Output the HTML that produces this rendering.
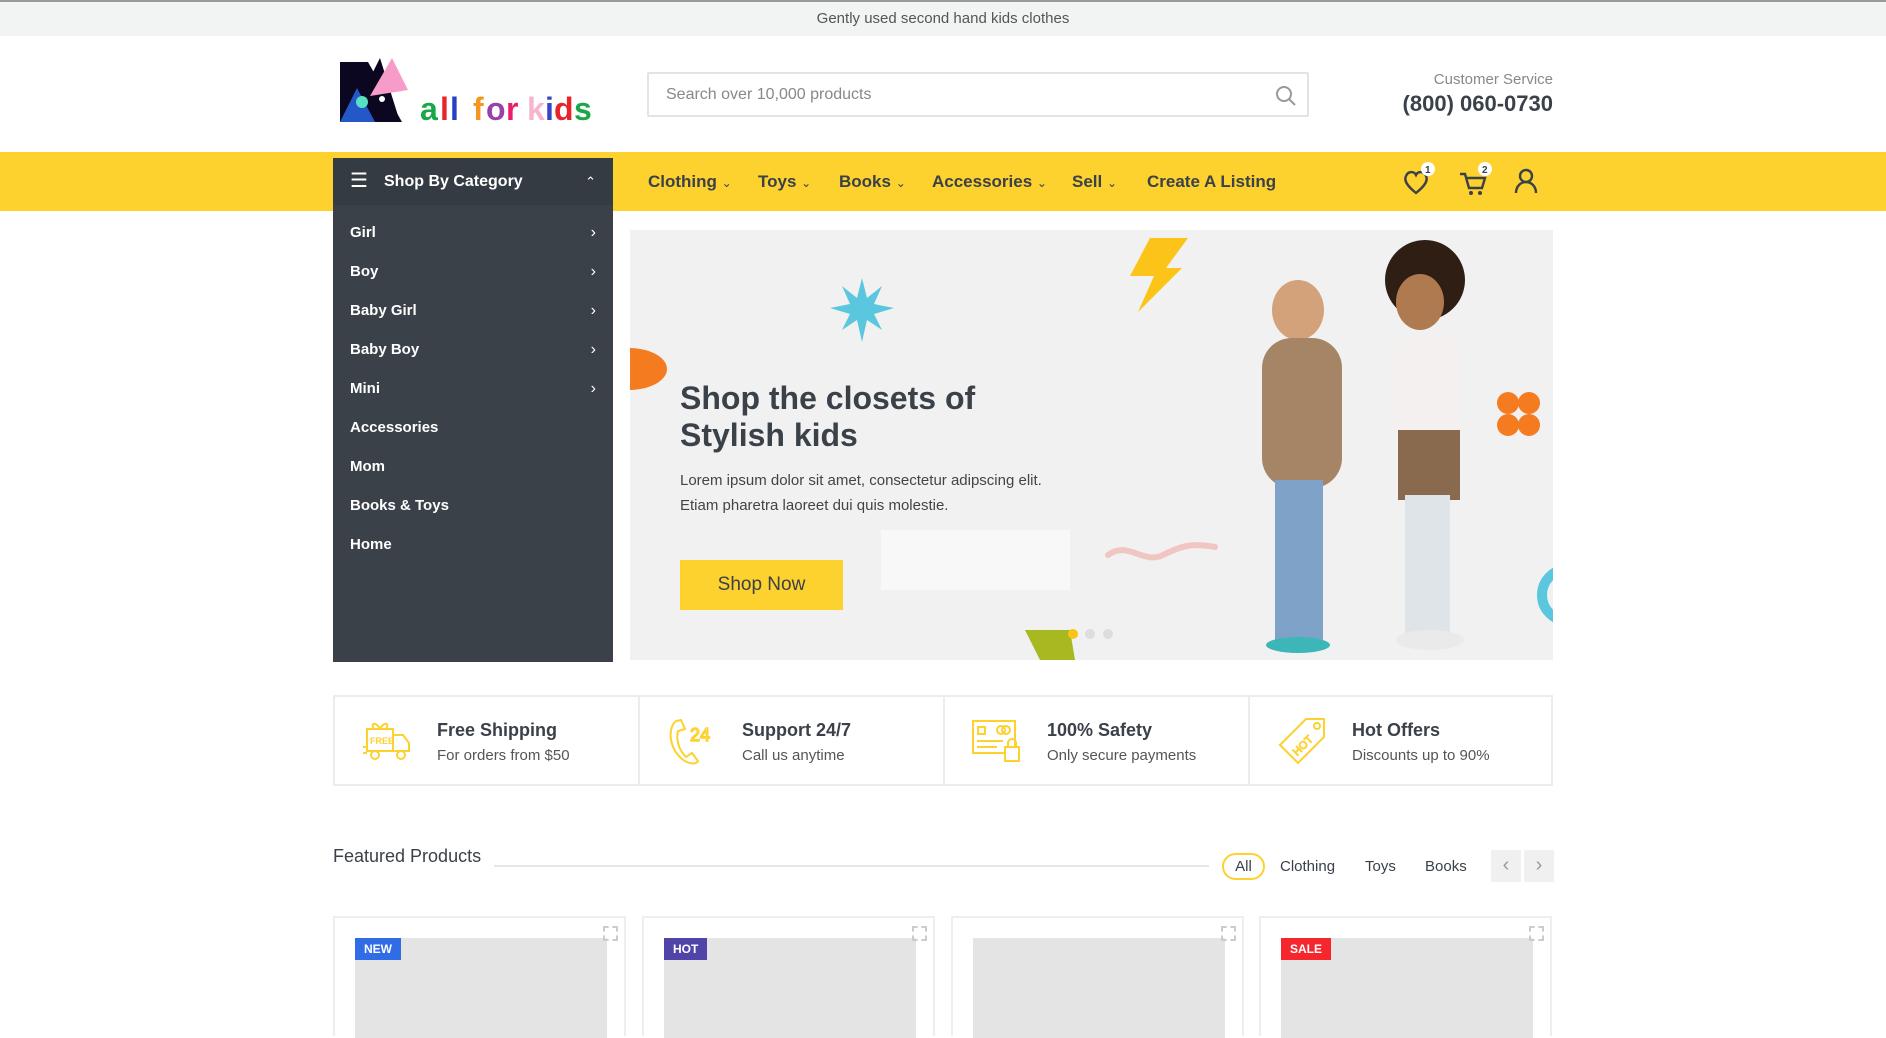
<!DOCTYPE html>
<html><head><meta charset="utf-8"><style>
*{box-sizing:border-box;margin:0;padding:0}
body{width:1886px;height:1026px;overflow:hidden;background:#fff;font-family:"Liberation Sans",sans-serif;color:#3a4149;position:relative}
.abs{position:absolute}
.top{left:0;top:0;width:1886px;height:36px;background:#f2f3f3;border-top:2px solid #999;text-align:center;font-size:15px;line-height:34px;color:#555}
.search{left:647px;top:72px;width:662px;height:45px;border:2px solid #e3e3e3;border-radius:2px;font-size:16px;color:#888;padding-left:17px;line-height:41px}
.nav{left:0;top:152px;width:1886px;height:59px;background:#fdd12e}
.navi{top:172px;font-size:17px;font-weight:bold;color:#3a4149}
.cat{left:333px;top:158px;width:280px;height:504px;background:#3a4149;color:#fff}
.cat .h{height:47px;font-weight:bold;font-size:16px;line-height:47px;padding-left:51px;background:#353b42;position:relative}
.cat .i{height:39px;line-height:39px;font-size:15px;font-weight:bold;padding-left:17px;position:relative}
.chev{position:absolute;right:17px;top:0;font-weight:normal;font-size:16px}
.banner{left:630px;top:230px;width:923px;height:430px;background:#f1f1f1;overflow:hidden}
.feat{top:695px;height:91px;border:2px solid #ececec;width:1220px;left:333px}
.fc{top:0;width:305px;height:87px;border-right:2px solid #ececec}
.fc b{position:absolute;left:102px;top:23px;font-size:18px}
.fc span{position:absolute;left:102px;top:50px;font-size:15px;color:#555}
.card{top:916px;width:293px;height:120px;border:2px solid #eee;border-bottom:none}
.card .img{position:absolute;left:20px;top:20px;width:252px;height:100px;background:#e4e4e4}
.tag{position:absolute;left:20px;top:20px;height:22px;padding:0 9px;color:#fff;font-size:12px;font-weight:bold;line-height:22px}
.exp{position:absolute;right:6px;top:8px;width:15px;height:15px;border:2px dashed #ccc}
</style></head><body>
<div class="abs top">Gently used second hand kids clothes</div>

<svg class="abs" style="left:340px;top:58px" width="270" height="68" viewBox="0 0 270 68">
<polygon points="0,4 0,64 62,64 28,4" fill="#0b0720"/>
<polygon points="20,64 60,64 40,0 30,20" fill="#0b0720"/>
<polygon points="0,64 35,64 17,30" fill="#2457c7"/>
<polygon points="30,38 52,0 68,32" fill="#f79bc8"/>
<circle cx="22" cy="44" r="6" fill="#58e0c4"/><circle cx="42" cy="41" r="3" fill="#fff"/>
<g font-family="Liberation Sans" font-weight="bold" font-size="32">
<text x="80" y="62" fill="#18a84a">a</text>
<text x="100" y="62" fill="#e8242b">l</text>
<text x="110" y="62" fill="#2a3fc4">l</text>
<text x="133" y="62" fill="#f7941d">f</text>
<text x="146" y="62" fill="#9b3fa9">o</text>
<text x="166" y="62" fill="#ee1b6c">r</text>
<text x="187" y="62" fill="#f8b4cf">k</text>
<text x="205" y="62" fill="#3845c8">i</text>
<text x="214" y="62" fill="#e8242b">d</text>
<text x="234" y="62" fill="#18a84a">s</text></g>
</svg>

<div class="abs search">Search over 10,000 products
<svg style="position:absolute;right:10px;top:11px" width="22" height="22" viewBox="0 0 22 22"><circle cx="9" cy="9" r="7" fill="none" stroke="#999" stroke-width="2"/><path d="M14 14l6 6" stroke="#999" stroke-width="2"/></svg></div>
<div class="abs" style="right:333px;top:71px;text-align:right;font-size:15px;color:#888">Customer Service</div>
<div class="abs" style="right:333px;top:91px;text-align:right;font-size:22px;font-weight:bold;color:#3a4149">(800) 060-0730</div>

<div class="abs nav"></div>
<div class="abs navi" style="left:648px">Clothing <span style="font-weight:normal;font-size:12px">&#8964;</span></div>
<div class="abs navi" style="left:758px">Toys <span style="font-weight:normal;font-size:12px">&#8964;</span></div>
<div class="abs navi" style="left:839px">Books <span style="font-weight:normal;font-size:12px">&#8964;</span></div>
<div class="abs navi" style="left:932px">Accessories <span style="font-weight:normal;font-size:12px">&#8964;</span></div>
<div class="abs navi" style="left:1072px">Sell <span style="font-weight:normal;font-size:12px">&#8964;</span></div>
<div class="abs navi" style="left:1147px">Create A Listing</div>
<svg class="abs" style="left:1400px;top:160px" width="150" height="40" viewBox="0 0 150 40">
<path d="M16 33C6 25 4 20 6 16c2-5 8-5 10-1 2-4 8-4 10 1 2 4 0 9-10 17z" fill="none" stroke="#3a4149" stroke-width="2.4"/>
<circle cx="28" cy="9" r="7" fill="#fff"/><text x="25" y="13" font-size="10" font-weight="bold" fill="#3a4149">1</text>
<path d="M60 14h5l4 14h13l3-10H67" fill="none" stroke="#3a4149" stroke-width="2.4"/><circle cx="71" cy="33" r="2" fill="#3a4149"/><circle cx="80" cy="33" r="2" fill="#3a4149"/>
<circle cx="85" cy="9" r="7" fill="#fff"/><text x="82" y="13" font-size="10" font-weight="bold" fill="#3a4149">2</text>
<circle cx="126" cy="16" r="6" fill="none" stroke="#3a4149" stroke-width="2.4"/><path d="M116 33c0-7 5-11 10-11s10 4 10 11" fill="none" stroke="#3a4149" stroke-width="2.4"/>
</svg>

<div class="abs cat">
<div class="h"><span style="position:absolute;left:17px;top:0;font-size:20px;font-weight:normal">&#9776;</span>Shop By Category<span class="chev" style="font-size:13px">&#8963;</span></div>
<div style="height:8px"></div>
<div class="i">Girl<span class="chev">&#8250;</span></div>
<div class="i">Boy<span class="chev">&#8250;</span></div>
<div class="i">Baby Girl<span class="chev">&#8250;</span></div>
<div class="i">Baby Boy<span class="chev">&#8250;</span></div>
<div class="i">Mini<span class="chev">&#8250;</span></div>
<div class="i">Accessories</div>
<div class="i">Mom</div>
<div class="i">Books &amp; Toys</div>
<div class="i">Home</div>
</div>

<div class="abs banner">
<svg class="abs" style="left:0;top:0" width="923" height="430" viewBox="0 0 923 430">
<rect x="251" y="300" width="189" height="60" fill="#f8f8f8"/>
<polygon points="232,48 237,68 252,56 244,74 264,78 244,84 252,100 237,90 232,112 227,90 212,100 220,84 200,78 220,74 212,56 227,68" fill="#5ac7de"/>
<polygon points="520,8 558,8 536,38 552,38 508,82 524,46 500,46" fill="#fcc419"/>
<path d="M0 118a38 21 0 0 1 37 21 38 21 0 0 1-37 21z" fill="#f47b20"/>
<circle cx="878" cy="173" r="11" fill="#f47b20"/><circle cx="899" cy="173" r="11" fill="#f47b20"/><circle cx="878" cy="195" r="11" fill="#f47b20"/><circle cx="899" cy="195" r="11" fill="#f47b20"/>
<path d="M478 325c20-15 35 10 55 0s30-12 52-8" fill="none" stroke="#f0c5c2" stroke-width="6" stroke-linecap="round"/>
<polygon points="395,400 440,400 445,430 410,430" fill="#a8b820"/>
<circle cx="938" cy="365" r="26" fill="none" stroke="#5ac7de" stroke-width="10"/>
<ellipse cx="668" cy="80" rx="26" ry="30" fill="#d3a27a"/><rect x="632" y="108" width="80" height="150" rx="30" fill="#a58566"/><rect x="645" y="250" width="48" height="160" fill="#7fa3c8"/><ellipse cx="668" cy="415" rx="32" ry="8" fill="#3cb6b6"/>
<ellipse cx="795" cy="50" rx="40" ry="40" fill="#2e1e14"/><ellipse cx="790" cy="72" rx="24" ry="28" fill="#b07a50"/><rect x="762" y="105" width="68" height="110" rx="20" fill="#f4f0f0"/><rect x="768" y="200" width="62" height="70" fill="#8a6a4e"/><rect x="775" y="265" width="45" height="140" fill="#dfe4e8"/><ellipse cx="800" cy="410" rx="34" ry="10" fill="#eaeaea"/>
<circle cx="443" cy="404" r="5" fill="#fcc419"/><circle cx="460" cy="404" r="5" fill="#ddd"/><circle cx="478" cy="404" r="5" fill="#ddd"/>
</svg>
<div class="abs" style="left:50px;top:150px;font-size:32px;font-weight:bold;line-height:37px;color:#3a4149">Shop the closets of<br>Stylish kids</div>
<div class="abs" style="left:50px;top:238px;font-size:15px;line-height:25px;color:#444">Lorem ipsum dolor sit amet, consectetur adipscing elit.<br>Etiam pharetra laoreet dui quis molestie.</div>
<div class="abs" style="left:50px;top:330px;width:163px;height:50px;background:#fdd12e;font-size:19px;line-height:50px;text-align:center;color:#3a4149">Shop Now</div>
</div>

<div class="abs feat">
<div class="abs fc" style="left:0"><svg class="abs" style="left:26px;top:20px" width="52" height="48" viewBox="0 0 52 48" fill="none" stroke="#fdd12e" stroke-width="2"><rect x="6" y="12" width="26" height="22"/><path d="M32 18h10l6 8v8H32M2 36h4M2 30h4"/><circle cx="14" cy="38" r="4"/><circle cx="40" cy="38" r="4"/><path d="M19 12c-4-8-10-6-6 0M19 12c4-8 10-6 6 0"/><text x="9" y="27" font-size="9" fill="#fdd12e" stroke="none" font-weight="bold">FREE</text></svg><b>Free Shipping</b><span>For orders from $50</span></div>
<div class="abs fc" style="left:305px"><svg class="abs" style="left:26px;top:20px" width="52" height="50" viewBox="0 0 52 50" fill="none" stroke="#fdd12e" stroke-width="2"><path d="M10 4C2 10 2 30 16 42c6 5 14 6 16 2l-6-8-6 4C12 32 10 22 12 14l7-2-4-9z"/><text x="24" y="24" font-size="18" fill="none" stroke="#fdd12e" stroke-width="1.4">24</text></svg><b>Support 24/7</b><span>Call us anytime</span></div>
<div class="abs fc" style="left:610px"><svg class="abs" style="left:26px;top:22px" width="52" height="46" viewBox="0 0 52 46" fill="none" stroke="#fdd12e" stroke-width="2"><rect x="2" y="2" width="42" height="32"/><rect x="7" y="8" width="7" height="7"/><circle cx="30" cy="11" r="4"/><circle cx="35" cy="11" r="4"/><path d="M6 22h26M6 28h20"/><rect x="34" y="28" width="14" height="14" fill="#fff"/><path d="M37 28v-4a4 4 0 0 1 8 0v4"/></svg><b>100% Safety</b><span>Only secure payments</span></div>
<div class="abs fc" style="left:915px;border:none"><svg class="abs" style="left:26px;top:18px" width="56" height="52" viewBox="0 0 56 52" fill="none" stroke="#fdd12e" stroke-width="2"><path d="M30 4h18v18L22 48 4 30z"/><circle cx="41" cy="11" r="3"/><text x="14" y="36" font-size="11" fill="none" stroke="#fdd12e" stroke-width="1" transform="rotate(-45 24 30)">HOT</text></svg><b>Hot Offers</b><span>Discounts up to 90%</span></div>
</div>

<div class="abs" style="left:333px;top:846px;font-size:18px;color:#3a4149">Featured Products</div>
<div class="abs" style="left:494px;top:865px;width:715px;height:2px;background:#e6e6e6"></div>
<div class="abs" style="left:1222px;top:853px;width:43px;height:27px;border:2px solid #fdd12e;border-radius:14px;text-align:center;line-height:23px;font-size:15px">All</div>
<div class="abs" style="left:1280px;top:858px;font-size:15px">Clothing</div>
<div class="abs" style="left:1365px;top:858px;font-size:15px">Toys</div>
<div class="abs" style="left:1425px;top:858px;font-size:15px">Books</div>
<div class="abs" style="left:1491px;top:850px;width:30px;height:32px;background:#f0f0f0;text-align:center;line-height:30px;color:#999;font-size:20px">&#8249;</div>
<div class="abs" style="left:1524px;top:850px;width:30px;height:32px;background:#f0f0f0;text-align:center;line-height:30px;color:#999;font-size:20px">&#8250;</div>

<div class="abs card" style="left:333px"><div class="img"></div><div class="tag" style="background:#2f6ce5">NEW</div><div class="exp"></div></div>
<div class="abs card" style="left:642px"><div class="img"></div><div class="tag" style="background:#5144a8">HOT</div><div class="exp"></div></div>
<div class="abs card" style="left:951px"><div class="img"></div><div class="exp"></div></div>
<div class="abs card" style="left:1259px"><div class="img"></div><div class="tag" style="background:#f5262e">SALE</div><div class="exp"></div></div>
</body></html>
